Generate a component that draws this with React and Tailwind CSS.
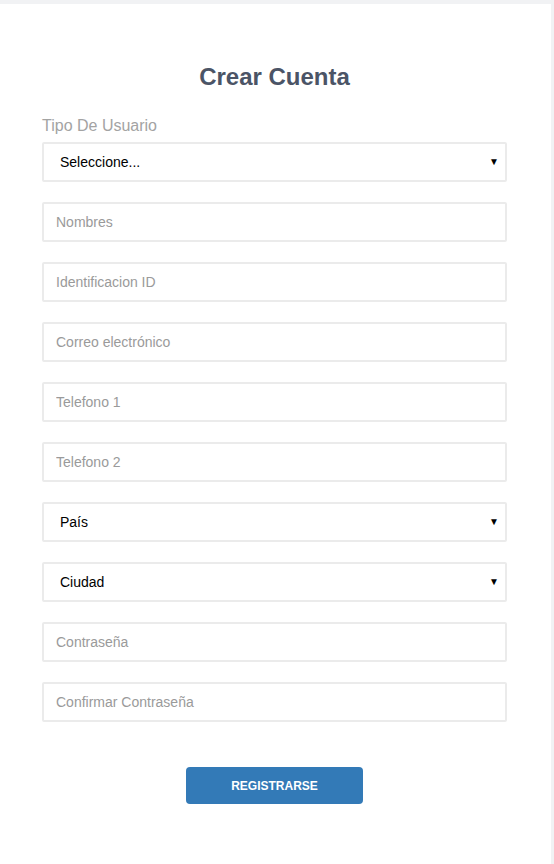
import React from 'react'

const font = { fontFamily: '"Liberation Sans", Arial, sans-serif' }

function SelectBox({ label }) {
  return (
    <div className="relative h-10">
      <select className="h-10 w-full appearance-none rounded-[2px] border-2 border-[#ebebeb] bg-white pl-4 text-[14px] text-black outline-none">
        <option>{label}</option>
      </select>
      <span className="pointer-events-none absolute right-[8px] top-[15px] text-[10px] leading-none text-black">▼</span>
    </div>
  )
}

function TextBox({ placeholder, type = 'text' }) {
  return (
    <input
      type={type}
      placeholder={placeholder}
      className="block h-10 w-full rounded-[2px] border-2 border-[#ebebeb] bg-white px-3 text-[14px] text-black outline-none placeholder:text-[#9a9a9a]"
    />
  )
}

export default function App() {
  return (
    <div className="min-h-screen bg-[#f1f2f4] pt-1 pr-[3px]" style={font}>
      <div className="h-[860px] bg-white px-[42px] pr-[44px] pt-[58px]">
        <h1 className="text-center text-[24px] font-bold leading-[30px] text-[#4b5466]">Crear Cuenta</h1>

        <label className="mt-6 block text-[16px] leading-5 text-[#a3a3a3]">Tipo De Usuario</label>

        <div className="mt-[6px] flex flex-col gap-5">
          <SelectBox label="Seleccione..." />
          <TextBox placeholder="Nombres" />
          <TextBox placeholder="Identificacion ID" />
          <TextBox placeholder="Correo electrónico" type="email" />
          <TextBox placeholder="Telefono 1" />
          <TextBox placeholder="Telefono 2" />
          <SelectBox label="País" />
          <SelectBox label="Ciudad" />
          <TextBox placeholder="Contraseña" type="password" />
          <TextBox placeholder="Confirmar Contraseña" type="password" />
        </div>

        <div className="mt-[45px] flex justify-center">
          <button className="h-[37px] w-[177px] rounded-[4px] bg-[#337ab7] text-[12px] font-bold text-white">
            REGISTRARSE
          </button>
        </div>
      </div>
    </div>
  )
}
